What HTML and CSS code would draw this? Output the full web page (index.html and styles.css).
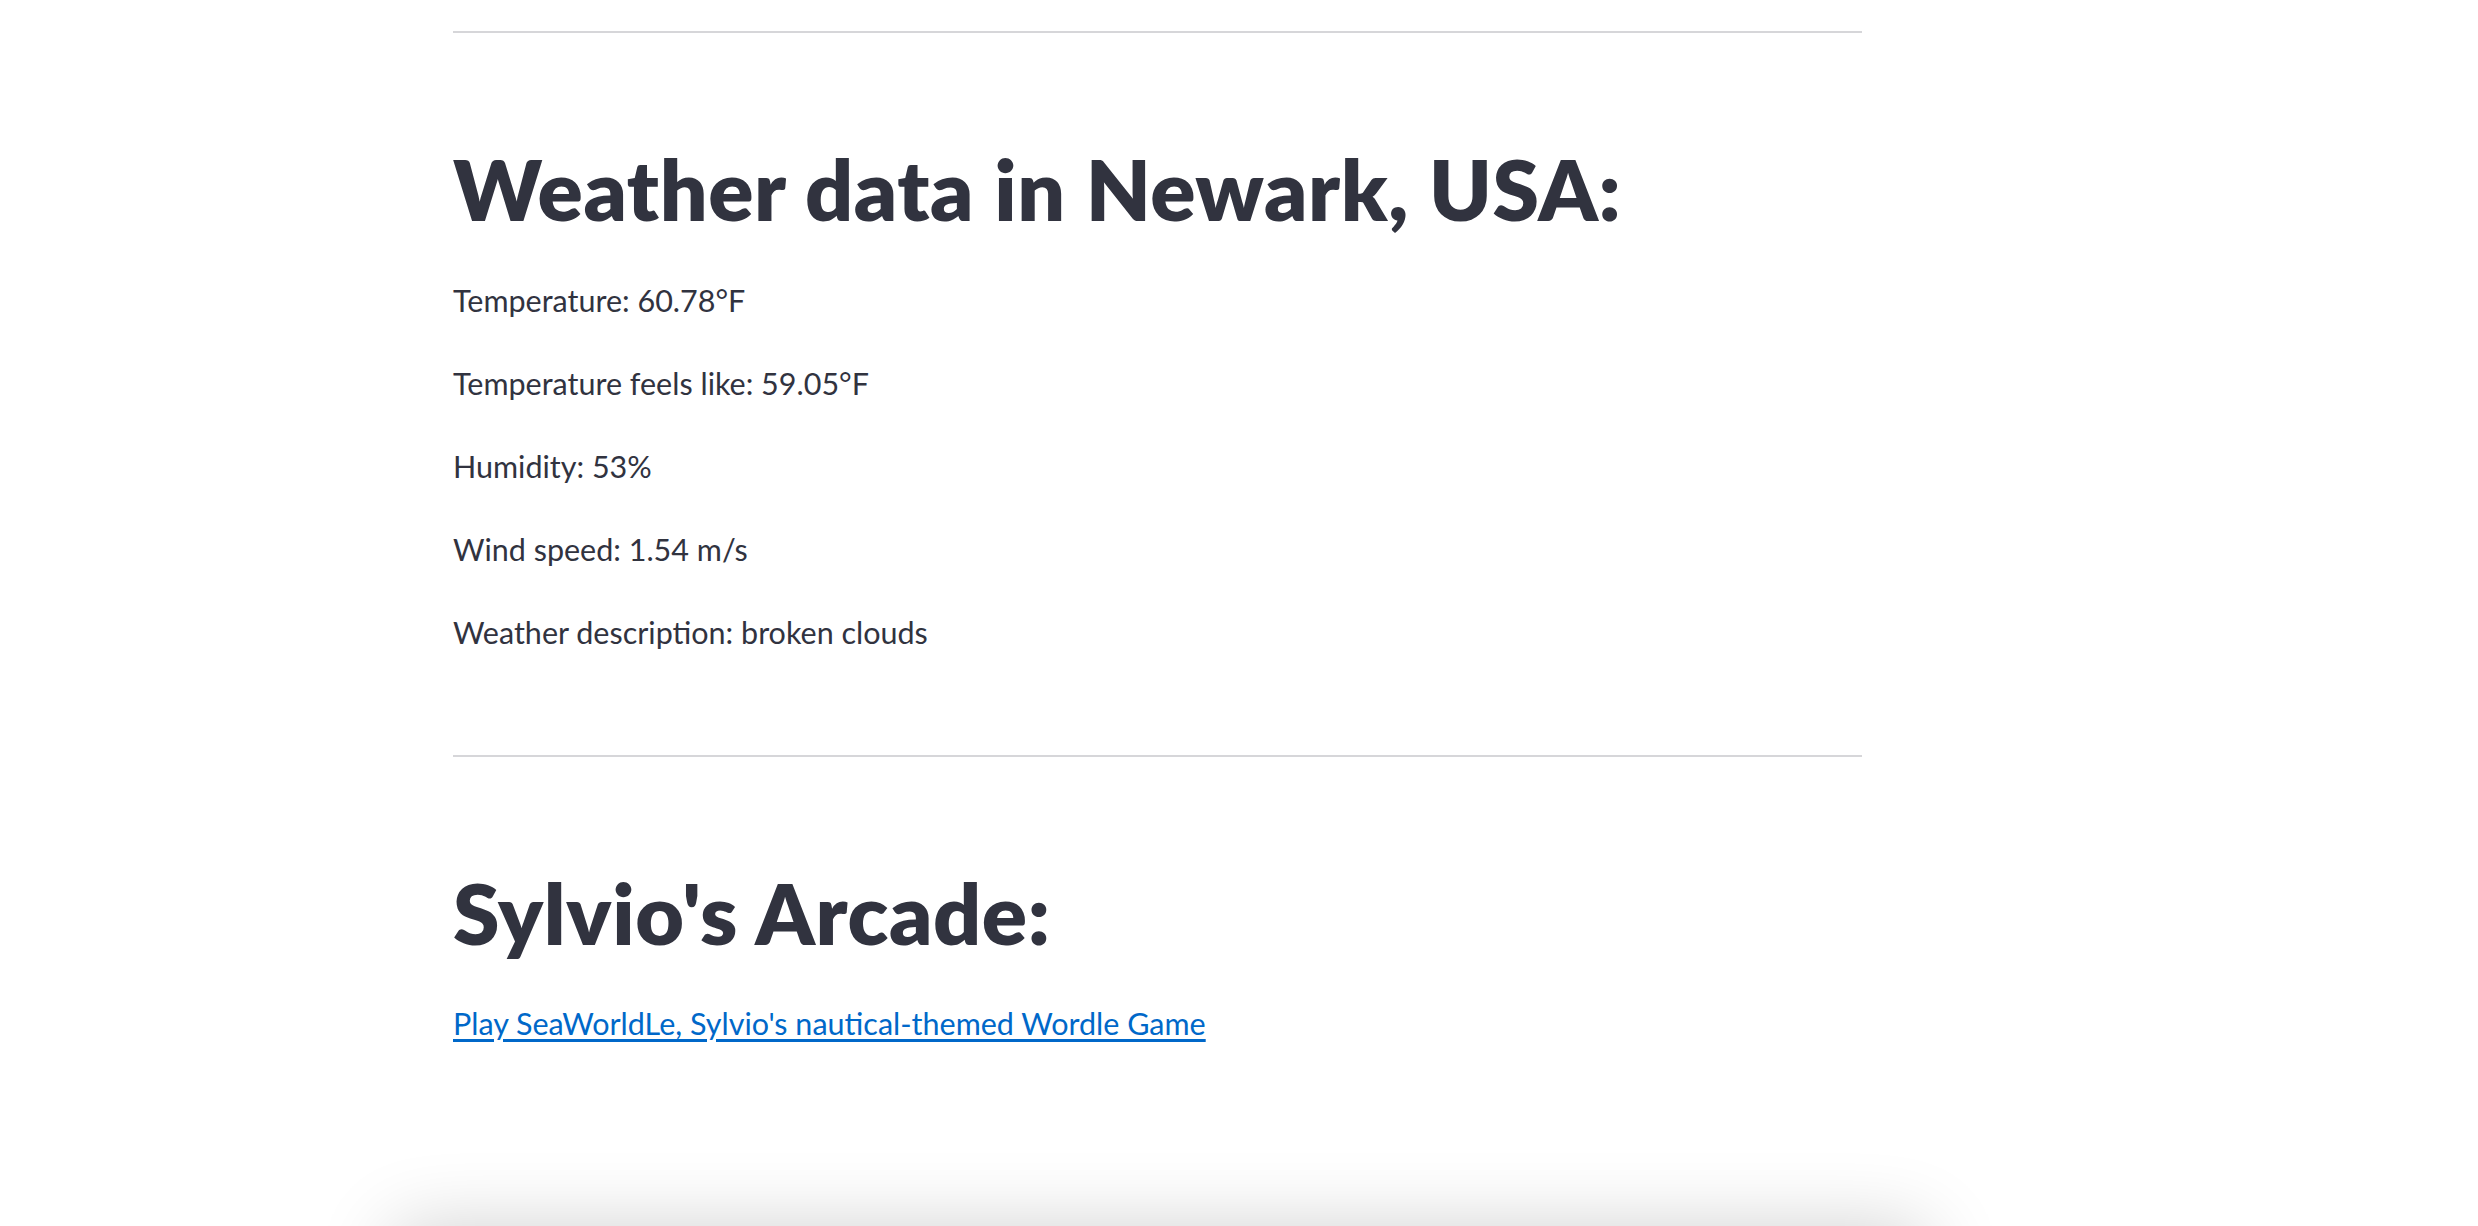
FILE: index.html
```html
<!DOCTYPE html>
<html lang="en">
<head>
<meta charset="utf-8">
<title>Weather data</title>
<link rel="stylesheet" href="styles.css">
</head>
<body>
<main class="main">
  <div class="block">
    <hr class="divider first">
    <h1 class="heading">Weather data in Newark, USA:</h1>
    <p class="text">Temperature: 60.78°F</p>
    <p class="text">Temperature feels like: 59.05°F</p>
    <p class="text">Humidity: 53%</p>
    <p class="text">Wind speed: 1.54 m/s</p>
    <p class="text">Weather description: broken clouds</p>
    <hr class="divider">
    <h2 class="heading">Sylvio's Arcade:</h2>
    <p class="text"><a class="link" href="#">Play SeaWorldLe, Sylvio's nautical-themed Wordle Game</a></p>
  </div>
</main>
<div class="bottom-bar"></div>
</body>
</html>
```
FILE: styles.css
```css
html, body {
  margin: 0;
  padding: 0;
  background: #ffffff;
  overflow: hidden;
}
body {
  font-family: "Source Sans Pro", Lato, "Noto Sans", sans-serif;
  color: #31333f;
  height: 1226px;
}
.main {
  padding: 31px 0 0 453px;
}
.block {
  width: 1409px;
  display: flex;
  flex-direction: column;
}
.divider {
  margin: 64px 0 103px;
  border: 0;
  height: 2px;
  background: #d6d6d9;
}
.divider.first {
  margin-top: 0;
}
.heading {
  margin: 0 0 33px;
  font-size: 84px;
  font-weight: 800;
  line-height: 105.6px;
  letter-spacing: 0.6px;
}
.text {
  margin: 0 0 32px;
  font-size: 30.5px;
  line-height: 51.2px;
}
.link {
  color: #0068c9;
  text-decoration: underline;
  text-underline-offset: 4px;
}
.bottom-bar {
  position: fixed;
  left: 395px;
  width: 1530px;
  top: 1230px;
  height: 120px;
  background: #fff;
  box-shadow: 0 0 80px rgba(0, 0, 0, 0.2);
}
```
